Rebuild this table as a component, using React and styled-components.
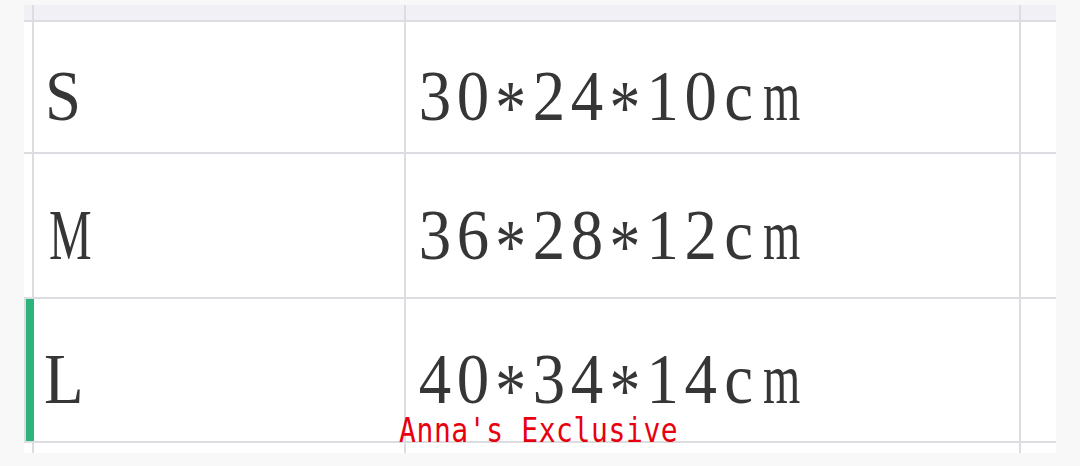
import React from "react";
import styled, { createGlobalStyle } from "styled-components";

const Global = createGlobalStyle`
  html, body { margin: 0; padding: 0; background: #f8f8f9; }
  body { width: 1080px; height: 466px; overflow: hidden; }
`;

const Sheet = styled.div`
  position: relative;
  margin: 5px 0 0 24px;
  width: 1032px;
  display: grid;
  grid-template-columns: 8px 370px 613px 35px;
  grid-template-rows: 15px 130px 143px 142px 10px;
  gap: 2px;
  background: #dcdde1;
`;

const HeadCell = styled.div`
  background: #f1f1f5;
`;

const Gutter = styled.div`
  background: ${(p) => (p.$active ? "#2db47c" : "#ffffff")};
  margin-left: ${(p) => (p.$active ? "2px" : "0")};
  margin-right: ${(p) => (p.$active ? "-2px" : "0")};
  position: relative;
  z-index: 1;
`;

const Cell = styled.div`
  background: #ffffff;
  display: flex;
  align-items: center;
  padding: 18px 0 0 ${(p) => p.$pad}px;
  box-sizing: border-box;
`;

const CellText = styled.span`
  font-family: "Liberation Serif", "Times New Roman", serif;
  font-size: 72px;
  line-height: 44px;
  color: #363636;
  white-space: nowrap;
  display: inline-flex;
  align-items: center;
  transform: scaleX(0.9);
  transform-origin: left center;
`;

const Glyph = styled.span`
  display: inline-block;
  width: 42.2px;
  line-height: 44px;
  text-align: center;
  transform: ${(p) =>
    p.$kind === "star"
      ? "translateY(12px) scale(0.95, 1.05)"
      : p.$kind === "wide"
      ? "scaleX(0.74)"
      : "none"};
`;

const Blank = styled.div`
  background: #ffffff;
`;

const Watermark = styled.div`
  position: absolute;
  left: 375px;
  top: 414px;
  font-family: "DejaVu Sans Mono", "Liberation Mono", monospace;
  font-size: 28px;
  letter-spacing: 0.6px;
  line-height: 1;
  color: #e8000f;
  white-space: pre;
  transform: scaleY(1.18);
  transform-origin: left 85%;
  z-index: 2;
`;

const rows = [
  { size: "S", dims: "30*24*10cm" },
  { size: "M", dims: "36*28*12cm" },
  { size: "L", dims: "40*34*14cm", active: true },
];

const kindOf = (c) => (c === "*" ? "star" : c === "M" || c === "m" ? "wide" : "plain");

const Mono = ({ text }) => (
  <CellText>
    {text.split("").map((c, i) => (
      <Glyph key={i} $kind={kindOf(c)}>
        {c}
      </Glyph>
    ))}
  </CellText>
);

export default function App() {
  return (
    <>
      <Global />
      <Sheet>
        <HeadCell />
        <HeadCell />
        <HeadCell />
        <HeadCell />
        {rows.map((r) => (
          <React.Fragment key={r.size}>
            <Gutter $active={r.active} />
            <Cell $pad={10}>
              <Mono text={r.size} />
            </Cell>
            <Cell $pad={10}>
              <Mono text={r.dims} />
            </Cell>
            <Blank />
          </React.Fragment>
        ))}
        <Blank />
        <Blank />
        <Blank />
        <Blank />
        <Watermark>Anna's Exclusive</Watermark>
      </Sheet>
    </>
  );
}
